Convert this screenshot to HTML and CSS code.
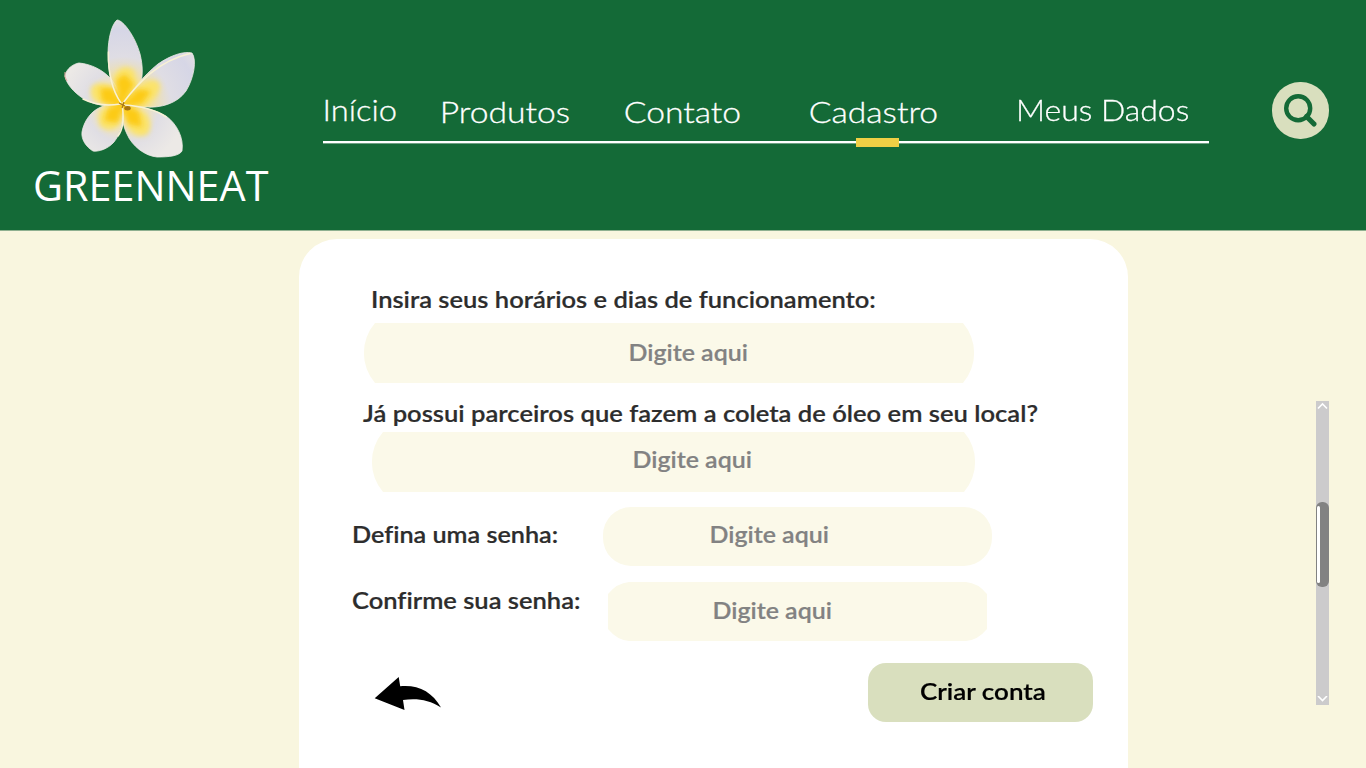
FILE: index.html
```html
<!DOCTYPE html>
<html lang="pt-BR">
<head>
<meta charset="utf-8">
<title>GREENNEAT - Cadastro</title>
<link rel="stylesheet" href="styles.css">
</head>
<body>
<header class="header">
  <div class="brand">
    <svg class="flower" viewBox="50 10 160 155" width="160" height="155" aria-hidden="true">
      <defs>
        <radialGradient id="petal" gradientUnits="userSpaceOnUse" cx="123" cy="105" r="88">
          <stop offset="0" stop-color="#f6d873"/>
          <stop offset=".3" stop-color="#f1e0a4"/>
          <stop offset=".55" stop-color="#dfdde4"/>
          <stop offset=".85" stop-color="#d6d6e6"/>
          <stop offset="1" stop-color="#e2dfe2"/>
        </radialGradient>
        <radialGradient id="petalShort" gradientUnits="userSpaceOnUse" cx="123" cy="105" r="62">
          <stop offset="0" stop-color="#f6d873"/>
          <stop offset=".3" stop-color="#f1e3b4"/>
          <stop offset=".6" stop-color="#e0dee4"/>
          <stop offset="1" stop-color="#ece9e6"/>
        </radialGradient>
        <filter id="soft" x="-40%" y="-40%" width="180%" height="180%"><feGaussianBlur stdDeviation="2.600"/></filter>
        <clipPath id="petals">
          <path d="M121 104C112 90 108 72 108 54C108 38 112 24 117 20C123 20 135 36 140 54C143 66 143 77 140 85C136 93 129 98 122 104Z"/>
          <path d="M122 104C130 93 144 75 158 64C171 55 184 51 192 53C197 60 194 78 186 91C177 104 160 108 146 107C137 107 130 107 122 104Z"/>
          <path d="M121 105C111 107 96 106 84 99C73 92 66 83 65 76C66 69 73 64 79 63C91 64 103 70 111 79C117 86 120 95 121 105Z"/>
          <path d="M122 105C124 119 122 132 114 142C108 149 98 152 93 151C86 147 81 139 82 132C84 121 91 111 101 107C108 104 116 105 122 105Z"/>
          <path d="M123 105C138 106 154 109 166 116C177 124 184 138 182 151C179 156 169 157 157 157C145 156 132 146 127 134C122 124 122 115 123 105Z"/>
        </clipPath>
      </defs>
      <g stroke="#eeebe6" stroke-width=".8" stroke-linejoin="round">
        <path fill="url(#petal)" d="M121 104C112 90 108 72 108 54C108 38 112 24 117 20C123 20 135 36 140 54C143 66 143 77 140 85C136 93 129 98 122 104Z"/>
        <path fill="url(#petal)" d="M122 104C130 93 144 75 158 64C171 55 184 51 192 53C197 60 194 78 186 91C177 104 160 108 146 107C137 107 130 107 122 104Z"/>
        <path fill="url(#petalShort)" d="M121 105C111 107 96 106 84 99C73 92 66 83 65 76C66 69 73 64 79 63C91 64 103 70 111 79C117 86 120 95 121 105Z"/>
        <path fill="url(#petalShort)" d="M122 105C124 119 122 132 114 142C108 149 98 152 93 151C86 147 81 139 82 132C84 121 91 111 101 107C108 104 116 105 122 105Z"/>
        <path fill="url(#petalShort)" d="M123 105C138 106 154 109 166 116C177 124 184 138 182 151C179 156 169 157 157 157C145 156 132 146 127 134C122 124 122 115 123 105Z"/>
      </g>
      <g clip-path="url(#petals)">
        <g fill="#fbe36c" filter="url(#soft)">
          <path d="M123 105L114 76Q122 62 134 70L137 84Z"/>
          <path d="M123 105L144 82Q160 76 160 88Q157 100 144 106Z"/>
          <path d="M121 105L112 86Q100 80 92 86Q88 94 96 102Z"/>
          <path d="M121 106L102 109Q96 116 100 126Q110 134 118 126Z"/>
          <path d="M124 106L146 113Q154 124 148 134Q138 140 129 130Z"/>
        </g>
        <g fill="#fccb16" filter="url(#soft)">
          <path d="M121 107L116 80L125 74L134 84Z"/>
          <path d="M120 107L138 89L151 91L142 104Z"/>
          <path d="M124 107L113 88L100 88L102 102Z"/>
          <path d="M124 104L108 108L104 121L118 123Z"/>
          <path d="M121 104L139 111L142 127L128 124Z"/>
        </g>
      </g>
      <g fill="none" stroke="#f8f1d4" stroke-width="1.500" stroke-linecap="round">
        <path d="M108.500 52C108 73 112 90 121 103"/>
        <path d="M123 103C138 83 158 61 190 53.500"/>
        <path d="M83 99C95 105 108 106 120 104"/>
        <path d="M122.500 107C124 120 122 131 118 136"/>
        <path d="M124 105C139 106 155 109 166 117"/>
      </g>
      <path d="M65 72Q64 77 67 81" fill="none" stroke="#e5a9a0" stroke-width="1"/>
      <ellipse cx="127.500" cy="108.300" rx="3.200" ry="2.200" fill="#a8740f"/>
      <path d="M119 103L125 106M122 108L124 102" stroke="#ad7910" stroke-width="1.300"/>
    </svg>
    <span class="brand-name">GREENNEAT</span>
  </div>
  <nav class="nav">
    <a class="nav-item home"><span>Início</span></a>
    <a class="nav-item products"><span>Produtos</span></a>
    <a class="nav-item contact"><span>Contato</span></a>
    <a class="nav-item register"><span>Cadastro</span></a>
    <a class="nav-item account"><span>Meus Dados</span></a>
    <span class="marker"></span>
  </nav>
  <div class="search">
    <svg viewBox="0 0 57 57" width="57" height="57" aria-label="Buscar">
      <circle cx="26.200" cy="26.200" r="12" fill="none" stroke="#146a37" stroke-width="4.400"/>
      <path d="M34.500 34.500L42 42" stroke="#146a37" stroke-width="5.200" stroke-linecap="round"/>
    </svg>
  </div>
</header>
<main class="main">
  <section class="card">
    <div class="label hours"><span>Insira seus horários e dias de funcionamento:</span></div>
    <div class="field field-hours"><span class="hint">Digite aqui</span></div>
    <div class="label partners"><span>Já possui parceiros que fazem a coleta de óleo em seu local?</span></div>
    <div class="field field-partners"><span class="hint">Digite aqui</span></div>
    <div class="row row-password">
      <div class="label password"><span>Defina uma senha:</span></div>
      <div class="field field-password"><span class="hint">Digite aqui</span></div>
    </div>
    <div class="row row-confirm">
      <div class="label confirm"><span>Confirme sua senha:</span></div>
      <div class="field field-confirm"><span class="hint">Digite aqui</span></div>
    </div>
    <div class="actions">
      <svg class="back" viewBox="0 0 68 34" width="68" height="34" aria-label="Voltar">
        <path d="M.700 21.200L24.700 0L26.200 9.200C44 7.500 58 14.500 67 30.500C55 22.500 42 21 29 23L30.500 33Z" fill="#000"/>
      </svg>
      <button class="submit"><span>Criar conta</span></button>
    </div>
  </section>
  <div class="scrollbar">
    <svg viewBox="0 0 13 9" width="13" height="9"><path d="M2 7.500L6.500 3L11 7.500" fill="none" stroke="#fff" stroke-width="1.600"/></svg>
    <div class="thumb"></div>
    <svg class="down" viewBox="0 0 13 9" width="13" height="9"><path d="M2 0L6.500 4.500L11 0" fill="none" stroke="#fff" stroke-width="1.600"/></svg>
  </div>
</main>
</body>
</html>
```
FILE: styles.css
```css
* { box-sizing: border-box; }
body {
  margin: 0;
  width: 1366px;
  height: 768px;
  overflow: hidden;
  background: #f9f6df;
  font-family: Lato, "Open Sans", sans-serif;
  font-variant-ligatures: none;
}
.header {
  display: flex;
  height: 231px;
  background: #146a37;
  border-bottom: 1px solid #8fb090;
}
.brand { width: 323px; padding-top: 10px; }
.flower { display: block; margin-left: 50px; }
.brand-name {
  display: block;
  margin: -3.500px 0 0 33px;
  font: 41.3px/46px "Open Sans", sans-serif;
  color: #fff;
  white-space: nowrap;
}
.nav {
  position: relative;
  display: flex;
  width: 886px;
  height: 143px;
  padding-top: 90px;
  border-bottom: 2px solid #fff;
  box-shadow: 0 1px 0 #6fa083;
}
.nav-item {
  flex: none;
  font-size: 30px;
  font-weight: 300;
  line-height: 38px;
  color: #fff;
  white-space: nowrap;
  -webkit-text-stroke: .3px #fff;
}
.nav-item span, .label span, .hint, .submit span {
  display: inline-block;
  transform-origin: left center;
}
.home { width: 117px; }
.products { width: 184px; padding-top: 2px; }
.contact { width: 185px; padding-top: 2px; }
.register { width: 207px; padding-top: 2px; }
.home span { transform: translateX(-.5px) scaleX(1.09); }
.products span, .contact span, .register span { transform: translateX(-.3px) scaleX(1.122); }
.account span { transform: scaleX(1.065); }
.marker {
  position: absolute;
  left: 533px;
  top: 138px;
  width: 43px;
  height: 9px;
  background: #f0cf45;
}
.search {
  width: 57px;
  height: 57px;
  margin: 82px 0 0 63px;
  border-radius: 28px;
  background: #d9dfbe;
}
.search svg { display: block; }
.main { display: flex; height: 537px; padding: 8px 0 0 299px; }
.card {
  width: 829px;
  height: 529px;
  padding-top: 46px;
  border-radius: 38px 38px 0 0;
  background: #fff;
}
.label, .hint, .submit {
  font-size: 22.5px;
  font-weight: 600;
  line-height: 28px;
  white-space: nowrap;
  -webkit-text-stroke: .2px currentColor;
}
.label { color: #2d2d2d; }
.label span { transform: translateY(.5px) scaleX(1.134); }
.hint { color: #828282; transform: translateX(.5px) scaleX(1.108); }
.field { height: 60px; background: #fbf9e9; }
.hours { margin-left: 72px; }
.field-hours {
  width: 610px;
  margin: 10px 0 0 65px;
  padding: 16px 0 0 264px;
  clip-path: path("M11 0H599A46 46 0 0 1 599 60H11A46 46 0 0 1 11 0Z");
}
.partners { margin: 16px 0 0 64px; }
.partners span { transform: translateY(.5px) scaleX(1.137); }
.field-partners {
  width: 603px;
  margin: 5px 0 0 73px;
  padding: 14px 0 0 260px;
  clip-path: path("M11 0H592A46 46 0 0 1 592 60H11A46 46 0 0 1 11 0Z");
}
.row { display: flex; margin-left: 53px; }
.row-password { margin-top: 15px; }
.password { width: 251px; padding-top: 13px; }
.password span { transform: translateY(.5px) scaleX(1.12); }
.field-password { width: 389px; height: 59px; padding: 14px 0 0 106px; border-radius: 28px; }
.row-confirm { margin-top: 16px; }
.confirm { width: 256px; padding-top: 4px; }
.field-confirm {
  width: 379px;
  height: 59px;
  padding: 15px 0 0 104px;
  clip-path: path("M21 0H358Q370 1 379 12V47Q370 58 358 59H21Q9 58 0 47V12Q9 1 21 0Z");
}
.actions { display: flex; margin: 22px 0 0 75px; }
.back { margin-top: 14px; }
.submit {
  width: 225px;
  height: 59px;
  margin-left: 426px;
  padding: 0 0 2px 52px;
  border: 0;
  border-radius: 18px;
  background: #d9dfbe;
  color: #000;
  font-family: inherit;
  text-align: left;
}
.submit span { transform: scaleX(1.155); }
.scrollbar {
  display: flex;
  flex-direction: column;
  width: 13px;
  height: 304px;
  margin: 162px 0 0 188px;
  background: #cccbcc;
}
.scrollbar svg { flex: none; }
.thumb {
  height: 85px;
  margin-top: 92px;
  padding: 4px 0 0 1px;
  border-radius: 6px;
  background: #828282;
}
.thumb::before {
  content: "";
  display: block;
  width: 3px;
  height: 77px;
  border-radius: 2px;
  background: #fff;
}
.down { margin-top: auto; }
```
